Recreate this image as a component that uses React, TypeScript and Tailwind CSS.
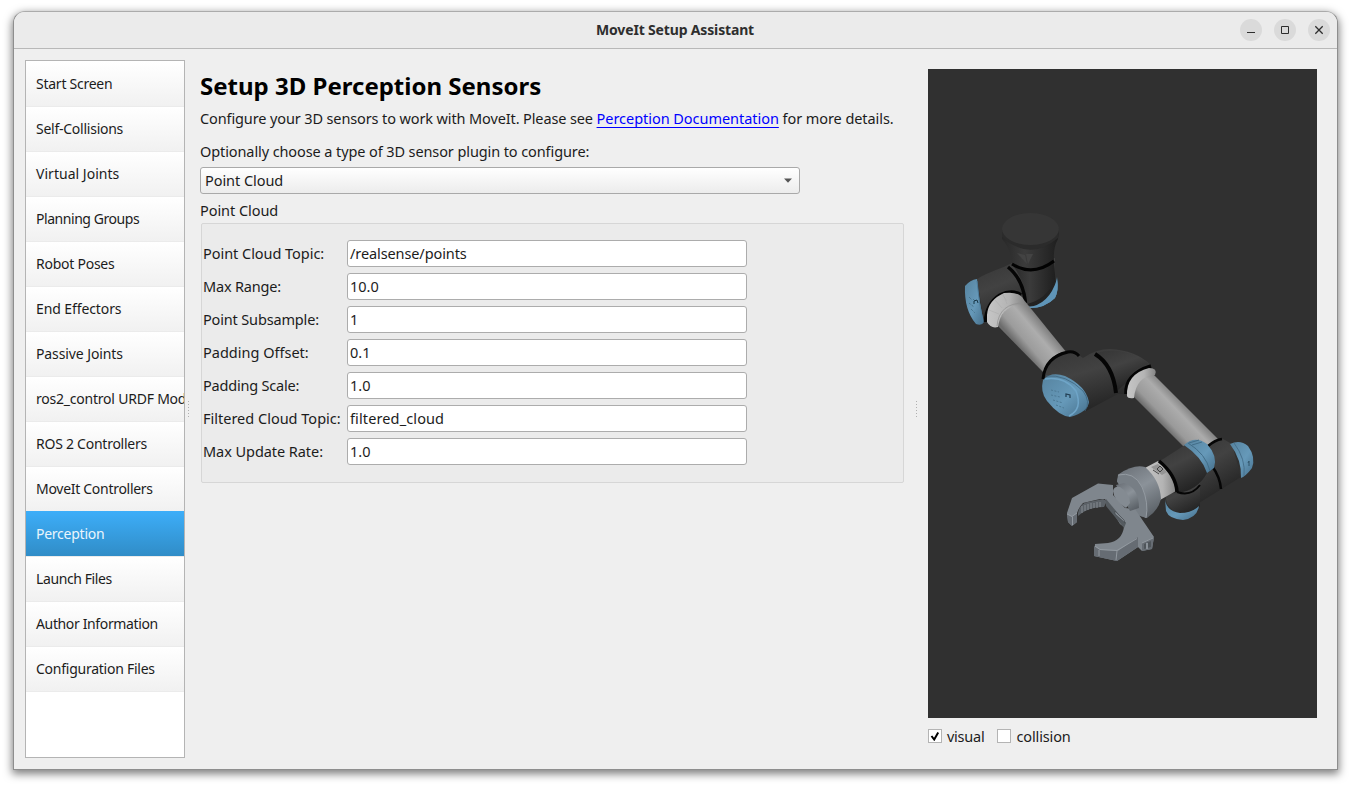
import React from "react";

type NavItem = { label: string; track: string };

const navItems: NavItem[] = [
  { label: "Start Screen", track: "tracking-[-0.25px]" },
  { label: "Self-Collisions", track: "tracking-[-0.25px]" },
  { label: "Virtual Joints", track: "tracking-[0.03px]" },
  { label: "Planning Groups", track: "tracking-[-0.45px]" },
  { label: "Robot Poses", track: "tracking-[-0.25px]" },
  { label: "End Effectors", track: "tracking-[-0.1px]" },
  { label: "Passive Joints", track: "tracking-[-0.1px]" },
  { label: "ros2_control URDF Modifications", track: "tracking-[-0.22px]" },
  { label: "ROS 2 Controllers", track: "tracking-[-0.25px]" },
  { label: "MoveIt Controllers", track: "tracking-[-0.29px]" },
  { label: "Perception", track: "tracking-[-0.25px]" },
  { label: "Launch Files", track: "tracking-[-0.4px]" },
  { label: "Author Information", track: "tracking-[-0.36px]" },
  { label: "Configuration Files", track: "tracking-[-0.25px]" },
];

const fields = [
  { label: "Point Cloud Topic:", value: "/realsense/points", lt: "tracking-[-0.04px]", vt: "tracking-[-0.1px]" },
  { label: "Max Range:", value: "10.0", lt: "tracking-[-0.2px]", vt: "tracking-normal" },
  { label: "Point Subsample:", value: "1", lt: "tracking-[-0.16px]", vt: "tracking-normal" },
  { label: "Padding Offset:", value: "0.1", lt: "tracking-normal", vt: "tracking-normal" },
  { label: "Padding Scale:", value: "1.0", lt: "tracking-[-0.2px]", vt: "tracking-normal" },
  { label: "Filtered Cloud Topic:", value: "filtered_cloud", lt: "tracking-normal", vt: "tracking-[0.12px]" },
  { label: "Max Update Rate:", value: "1.0", lt: "tracking-[-0.06px]", vt: "tracking-normal" },
];

function TitleBar() {
  return (
    <header className="flex h-[37px] shrink-0 items-center border-b border-[#b8b8b8] bg-[#ebebeb] pr-[7px] pl-[96px]">
      <h1 className="flex-1 pb-[2px] text-center text-[14px] font-bold tracking-[-0.16px] text-[#2e2e2e]">MoveIt Setup Assistant</h1>
      <div className="flex gap-3">
        <button className="flex size-[22px] items-center justify-center rounded-full bg-[#dadada]" aria-label="Minimize">
          <svg width="22" height="22"><path d="M7 13.5h8" stroke="#2e2e2e" /></svg>
        </button>
        <button className="flex size-[22px] items-center justify-center rounded-full bg-[#dadada]" aria-label="Maximize">
          <svg width="22" height="22"><path d="M7.5 7.5h7v7h-7z" fill="none" stroke="#2e2e2e" /></svg>
        </button>
        <button className="flex size-[22px] items-center justify-center rounded-full bg-[#dadada]" aria-label="Close">
          <svg width="22" height="22"><path d="M7.3 7.3l7.4 7.4M14.7 7.3l-7.4 7.4" stroke="#2e2e2e" strokeWidth="1.3" /></svg>
        </button>
      </div>
    </header>
  );
}

function Sidebar() {
  return (
    <nav className="h-[698px] w-[160px] shrink-0 overflow-hidden border border-[#b4b4b4] bg-white pt-px text-[14px] leading-[20px]">
      {navItems.map((item) =>
        item.label === "Perception" ? (
          <div key={item.label} className="-mt-px h-[46px] border-b border-[#ebebeb] bg-linear-to-b from-[#3daef9] to-[#308cc6] bg-origin-border pt-[13px] pl-[10px] text-[#eaf5fc]">
            <span className={item.track}>{item.label}</span>
          </div>
        ) : (
          <div key={item.label} className="h-[45px] border-b border-[#ebebeb] bg-linear-to-b from-white to-[#f1f1f1] pt-[12px] pl-[10px] whitespace-nowrap">
            <span className={item.track}>{item.label}</span>
          </div>
        ),
      )}
    </nav>
  );
}

function Handle() {
  return (
    <svg width="3" height="18" className="shrink-0">
      <path d="M1.5 1v17" stroke="#b0b0b0" strokeDasharray="1 2" />
    </svg>
  );
}

function Sensors() {
  return (
    <main className="flex w-[704px] shrink-0 flex-col pt-[8px]">
      <h2 className="h-[36px] text-[24px] leading-[36px] font-bold text-black">Setup 3D Perception Sensors</h2>
      <p className="mt-[3px] h-[22px] leading-[22px] whitespace-nowrap">
        <span className="tracking-[-0.12px]">Configure your 3D sensors to work with MoveIt. Please see </span>
        <a className="tracking-[-0.04px] text-[#0000ff] underline underline-offset-[3px]">Perception Documentation</a>
        <span className="tracking-[-0.07px]"> for more details.</span>
      </p>
      <p className="mt-[11px] h-[22px] leading-[22px]">
        <span className="tracking-[-0.1px]">Optionally choose a type of 3D sensor plugin to configure:</span>
      </p>
      <div className="mt-[5px] flex h-[27px] w-[600px] shrink-0 items-center justify-between rounded-[3px] border border-[#a9a9a9] bg-linear-to-b from-white to-[#ececec] pr-[7px] pl-1">
        <span className="tracking-[-0.06px]">Point Cloud</span>
        <svg width="8" height="5"><path d="M0 .5h8L4 4.8z" fill="#555" /></svg>
      </div>
      <p className="mt-[5px] h-[22px] leading-[22px] tracking-[-0.06px]">Point Cloud</p>
      <section className="mt-[2px] ml-px flex h-[260px] w-[703px] flex-col gap-[6px] rounded-[2px] border border-[#d6d6d6] bg-[#ebebeb] pt-[16px] pl-px">
        {fields.map((f) => (
          <label key={f.label} className="flex h-[27px] items-center">
            <span className={"w-[144px] whitespace-nowrap " + f.lt}>{f.label}</span>
            <span className={"flex h-[27px] w-[400px] items-center rounded-[3px] border border-[#acacac] bg-white pl-[2px] " + f.vt}>{f.value}</span>
          </label>
        ))}
      </section>
    </main>
  );
}

function RobotView() {
  return (
    <svg viewBox="928 69 389 649" className="block h-[649px] w-[389px] bg-[#303030]">
      <defs>
        <linearGradient id="tubeA" gradientUnits="userSpaceOnUse" x1="1020" y1="348" x2="1046" y2="326">
          <stop offset="0" stopColor="#6d6d6d" /><stop offset=".25" stopColor="#9c9c9c" /><stop offset=".65" stopColor="#adadad" /><stop offset="1" stopColor="#7c7c7c" />
        </linearGradient>
        <linearGradient id="tubeB" gradientUnits="userSpaceOnUse" x1="1161" y1="426" x2="1186" y2="402">
          <stop offset="0" stopColor="#666" /><stop offset=".25" stopColor="#9a9a9a" /><stop offset=".65" stopColor="#acacac" /><stop offset="1" stopColor="#777" />
        </linearGradient>
        <linearGradient id="dark" x1="0" y1="0" x2=".5" y2="1">
          <stop offset="0" stopColor="#353535" /><stop offset=".45" stopColor="#424242" /><stop offset="1" stopColor="#232323" />
        </linearGradient>
        <linearGradient id="neck"><stop offset="0" stopColor="#282828" /><stop offset=".4" stopColor="#3b3b3b" /><stop offset="1" stopColor="#1e1e1e" /></linearGradient>
        <linearGradient id="blue" x1="0" y1="0" x2="1" y2="1"><stop offset="0" stopColor="#56839f" /><stop offset=".55" stopColor="#6699b9" /><stop offset="1" stopColor="#456f8b" /></linearGradient>
        <linearGradient id="collar"><stop offset="0" stopColor="#c6c6c6" /><stop offset=".6" stopColor="#b4b4b4" /><stop offset="1" stopColor="#858585" /></linearGradient>
        <linearGradient id="steel" x1=".2" y1="0" x2=".7" y2="1"><stop offset="0" stopColor="#6d737a" /><stop offset=".45" stopColor="#8b9299" /><stop offset="1" stopColor="#5b6167" /></linearGradient>
      </defs>

      {/* base and shoulder */}
      <path d="M1024 306C1035 309 1052 303 1055 292L1057 277Q1059 290 1055 298Q1044 309 1028 308Z" fill="#5f95b8" />
      <path d="M1012 263C1003 268 988 272 977 279L984 321L1000 322L1025 305Q1048 303 1055 288V258Z" fill="url(#dark)" />
      <path d="M1012 264Q1027 285 1027 304Q1049 304 1056 288L1054 260Z" fill="url(#neck)" />
      <path d="M1027 304Q1047 299 1055 280Q1059 290 1055 296Q1044 307 1027 306Z" fill="#222" />
      <path d="M1028 307Q1049 305 1057 279Q1059 291 1055 298Q1044 309 1026 308Z" fill="#5f95b8" />
      <path d="M1002 230V239Q1011 249 1012 263Q1034 275 1054 260Q1053 248 1058 239L1059 228Z" fill="url(#neck)" />
      <path d="M1002 229V237Q1030 262 1058 238L1059 229Z" fill="#2b2b2b" />
      <ellipse cx="1030.500" cy="229" rx="28.500" ry="16" fill="#363636" />
      <path d="M1017 253l8 2 2 9zM1026 254l7 0-5 10z" fill="#434343" />
      <path d="M1012 264Q1033 277 1054 261" fill="none" stroke="#020202" strokeWidth="3.200" />
      <path d="M1008 267Q1023 279 1025.500 303" fill="none" stroke="#050505" strokeWidth="3.500" />
      <path d="M965 286Q970 280 977 279Q979 303 984 322Q982 326 976 324Q964 310 965 286Z" fill="url(#blue)" />
      <path d="M977 281Q979 303 983 322" fill="none" stroke="#4c7b99" strokeWidth="1" />
      <path d="M969 297l3 3m-3 3l5 4m-3 2l4 4m-2-14l2 2" stroke="#3f687f" strokeWidth="1" strokeDasharray="1 1" />
      <path d="M974 304v-3l3-1 1 3" fill="none" stroke="#193646" />
      <path d="M985.500 322Q986 304 1000 295Q1012 289 1021 295" fill="none" stroke="#040404" strokeWidth="3.500" />

      {/* upper arm */}
      <path d="M997 325L1043 372L1067 353L1024 300Q1005 303 997 325Z" fill="url(#tubeA)" />
      <path d="M987 315Q988 300 1004 293Q1020 291 1024 300V304Q1001 305 998 327Q991 329 987 322Z" fill="url(#collar)" />
      <path d="M1024 303Q999 303 997 326" fill="none" stroke="#8f8f8f" strokeWidth=".7" />
      <path d="M1003 294l4 10m-12-4l7 8m-13 2l10 4m3-20l5 7" fill="none" stroke="#aaa" strokeWidth=".5" />

      {/* elbow */}
      <path d="M1043 376Q1046 358 1062 352L1073 351L1083 358Q1096 349 1110 349Q1135 350 1151 365Q1130 371 1126 394L1118 394L1086 411L1048 385Z" fill="url(#dark)" />
      <path d="M1096 353Q1111 349 1124 352Q1141 356 1149 364Q1132 368 1126 383L1118 390Q1113 366 1096 353Z" fill="url(#dark)" />
      <path d="M1044 370Q1048 360 1057 353" fill="none" stroke="#aaa" strokeWidth="1" />
      <path d="M1043 379Q1045 357 1068 352Q1075 351 1079 356" fill="none" stroke="#050505" strokeWidth="3" />
      <path d="M1095 354Q1113 365 1116 393" fill="none" stroke="#050505" strokeWidth="4" />
      <path d="M1126 394Q1125 374 1151 366" fill="none" stroke="#040404" strokeWidth="3.500" />
      <path d="M1043 380Q1051 371 1065 376Q1086 386 1089 402Q1088 412 1070 417Q1059 416 1047 401Q1040 392 1043 380Z" fill="url(#blue)" />
      <path d="M1045 379Q1065 376 1076 391Q1083 409 1069 416" fill="none" stroke="#6fa5c8" strokeWidth="1.500" />
      <path d="M1046 376Q1066 374 1083 391Q1091 402 1085 411" fill="none" stroke="#3d657f" strokeWidth=".8" />
      <path d="M1051 390l8 2m-8 3l9 2m-7 3l10 3m-7 2l8 3" stroke="#4c7893" strokeDasharray="2 1.500" />
      <path d="M1066 397v-3l4 1v3" fill="none" stroke="#203c50" strokeWidth="1.200" />

      {/* forearm */}
      <path d="M1133 396L1185 448L1222 443L1152 373Q1137 376 1133 396Z" fill="url(#tubeB)" />
      <path d="M1127 396Q1126 374 1149 368Q1158 368 1155 375Q1136 376 1134 398Q1128 399 1127 396Z" fill="url(#collar)" />

      {/* wrist */}
      <path d="M1208 446Q1217 437 1223 439L1232 444L1241 477L1199 503L1187 490Z" fill="url(#dark)" />
      <path d="M1208 446Q1215 440 1222 439" fill="none" stroke="#050505" strokeWidth="2.500" />
      <path d="M1212 466Q1220 477 1221 489" fill="none" stroke="#050505" strokeWidth="2.500" />
      <path d="M1230 444Q1240 439 1248 446Q1256 457 1252 468Q1246 476 1241 478Q1242 460 1230 444Z" fill="url(#blue)" />
      <path d="M1234 443Q1246 459 1244 476" fill="none" stroke="#47718d" />
      <path d="M1248 463l1-2v5" fill="none" stroke="#31556b" />
      <path d="M1165 494Q1184 494 1200 481V507L1180 517L1167 504Z" fill="url(#dark)" />
      <path d="M1165 499Q1166 511 1180 513Q1192 513 1199 506Q1197 518 1183 520Q1169 519 1166 511Z" fill="url(#blue)" />
      <path d="M1160 461L1185 445Q1206 456 1207 473Q1198 490 1178 493Q1177 477 1160 461Z" fill="url(#dark)" />
      <path d="M1177 492Q1191 497 1200 485" fill="none" stroke="#050505" strokeWidth="2" />
      <path d="M1184 445Q1195 435 1207 444Q1218 456 1214 468L1207 473Q1202 457 1184 445Z" fill="url(#blue)" />
      <path d="M1188 443Q1206 454 1210 471" fill="none" stroke="#426d88" />
      <path d="M1189 443l10-3m-7 5l10-3" stroke="#426d88" />
      <path d="M1143 469L1158 461Q1176 475 1176 491L1160 500Z" fill="url(#collar)" />
      <path d="M1159 461Q1176 475 1177 492" fill="none" stroke="#050505" strokeWidth="3.500" />
      <path d="M1151 467l11 8 5-3-9-8z" fill="#959595" />
      <path d="M1157 469l3-3 3 3-3 3zm-4 1l6 4" fill="none" stroke="#3a3a3a" strokeWidth=".9" />

      {/* gripper */}
      <path d="M1117 481L1119 474Q1134 464 1145 467Q1160 480 1161 499Q1158 511 1147 518L1133 514Z" fill="url(#steel)" />
      <path d="M1118 475Q1134 471 1142 487Q1149 503 1146 518L1130 512Q1134 490 1117 482Z" fill="#777e85" />
      <path d="M1118 475Q1134 471 1142 487Q1149 503 1146 518" fill="none" stroke="#949ba2" strokeWidth="1" />
      <path d="M1067 513L1072 498L1098 483.500L1113 485V495L1125 508L1135 509L1154 537L1152 549L1142 551L1138 547L1117 561L1094 556L1095 544L1108 543Q1122 541 1124 527L1120 524L1105 499L1100 499L1083 503Q1079 507 1077 513V522L1072 526L1068 522Z" fill="#7f868d" />
      <path d="M1078 513Q1080 503 1088 502L1103 499L1107 501L1104 507Q1088 507 1078 516Z" fill="#5b6167" />
      <path d="M1082 506v7m3-8v6m3-7v6m3-7v6m3-6v5m3-6v6m3-6v5" stroke="#858b91" strokeWidth="1" />
      <path d="M1106 499L1126 523L1124 528L1106 506Z" fill="#555b60" />
      <path d="M1115 511l9 9 1 3-10-9z" fill="#858c93" stroke="#454a4f" strokeWidth=".7" />
      <path d="M1116 485L1124 483Q1139 488 1139 508L1130 511Z" fill="url(#steel)" />
      <path d="M1113 491Q1114 486 1120 487Q1130 493 1130 503L1126 508Q1114 501 1113 491Z" fill="#848b92" />
      <path d="M1094 546l6 4 18 1 20-14v10l-21 14-23-5zM1067 514l5 3 5-4v9l-5 4-4-4zM1142 543l12-6-2 12-10 2z" fill="#666c73" />
      <path d="M1095 546l5 3.500 17 1 20-12M1067 514l5 2.500 5-3.500M1117 551l-1 9M1099 550v6M1142 543l11-5M1072.500 517v8" fill="none" stroke="#969da4" strokeWidth=".9" />
      <path d="M1144 544l7-3v6l-7 2z" fill="#4f555a" />
      <path d="M1147 543v6" stroke="#8b9299" strokeWidth="2" />
    </svg>
  );
}

export default function App() {
  return (
    <div className="h-[786px] w-[1351px] overflow-hidden bg-white pt-[11px] pl-[13px] font-['Noto_Sans','Open_Sans',sans-serif] text-[14.5px] text-[#1c1c1c]">
      <div className="flex h-[759px] w-[1325px] flex-col overflow-hidden rounded-t-[12px] border border-[#8e8e8e] border-t-[#ababab] bg-[#efefef] shadow-[0_3px_8px_1px_rgba(0,0,0,0.5)]">
        <TitleBar />
        <div className="flex pt-[11px] pl-[11px]">
          <Sidebar />
          <div className="flex w-[15px] shrink-0 items-center pl-[2px]"><Handle /></div>
          <Sensors />
          <div className="flex w-[24px] shrink-0 items-center pl-[11px]"><Handle /></div>
          <aside className="w-[389px] shrink-0 pt-[9px]">
            <RobotView />
            <div className="mt-[7px] flex h-[22px] items-center gap-[13px] leading-[20px]">
              <label className="flex items-center gap-[5px]">
                <span className="flex size-[14px] items-center justify-center border border-[#b4b4b4] bg-white">
                  <svg width="10" height="10" viewBox="0 0 10 10"><path d="M1.500 5l2.700 3.500 4-7" fill="none" stroke="#000" strokeWidth="2" /></svg>
                </span>
                <span className="tracking-[-0.25px]">visual</span>
              </label>
              <label className="flex items-center gap-[5px]">
                <span className="size-[14px] border border-[#b4b4b4] bg-white" />
                <span className="tracking-[-0.12px]">collision</span>
              </label>
            </div>
          </aside>
        </div>
      </div>
    </div>
  );
}
